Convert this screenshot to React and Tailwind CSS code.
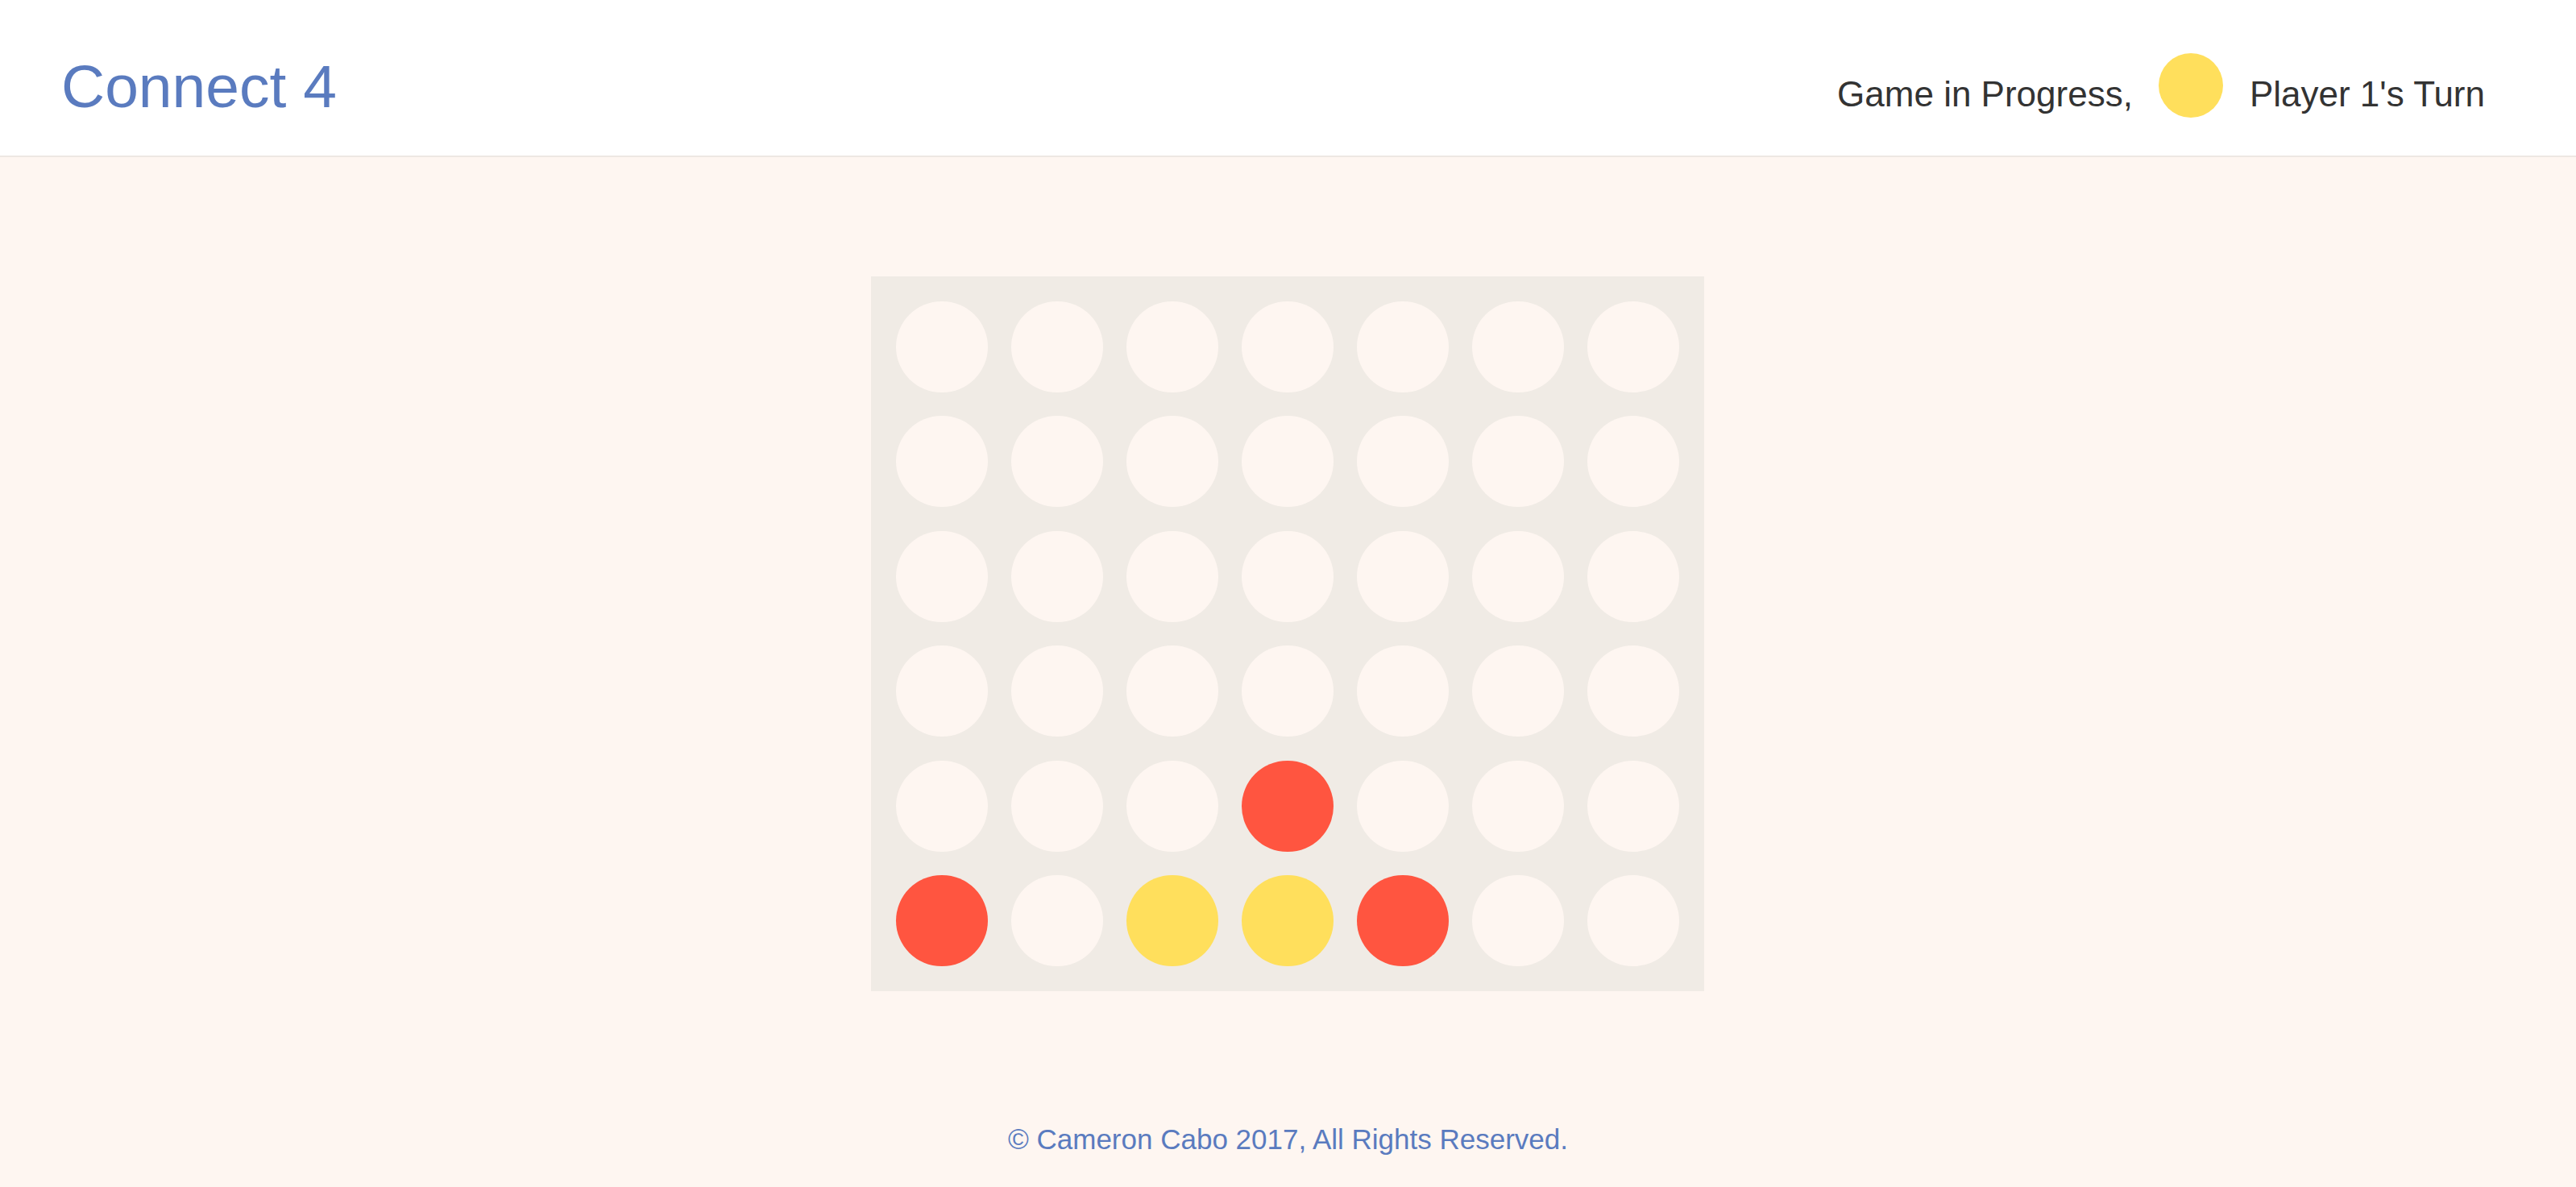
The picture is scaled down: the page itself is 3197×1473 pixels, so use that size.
import React from 'react';

const board = [
  [0, 0, 0, 0, 0, 0, 0],
  [0, 0, 0, 0, 0, 0, 0],
  [0, 0, 0, 0, 0, 0, 0],
  [0, 0, 0, 0, 0, 0, 0],
  [0, 0, 0, 1, 0, 0, 0],
  [1, 0, 2, 2, 1, 0, 0],
];

const cellColor = (v) => {
  if (v === 1) return 'bg-[#ff5540]';
  if (v === 2) return 'bg-[#ffdf5c]';
  return 'bg-[#fef6f1]';
};

const App = () => {
  return (
    <div className="h-screen flex flex-col bg-[#fef6f1] font-['Liberation_Sans',Arial,sans-serif]">
      {/* Header */}
      <header className="h-[195px] shrink-0 bg-white border-b-2 border-[#ede8e3] flex items-center justify-between pl-[76px] pr-[113px]">
        <h1 className="text-[75px] leading-none text-[#5a7bbf] mt-[22px]">Connect 4</h1>
        <div className="flex items-center text-[44px] text-[#333333] mt-[40px]">
          <span>Game in Progress,</span>
          <span className="w-[80px] h-[80px] rounded-full bg-[#ffdf5c] ml-[32px] mr-[33px] mt-[-22px]"></span>
          <span>Player 1's Turn</span>
        </div>
      </header>

      {/* Board */}
      <main className="flex justify-center pt-[148px] pr-[2px]">
        <div className="bg-[#f0ebe5] grid grid-cols-7 gap-x-[29px] gap-y-[29.4px] p-[31px]">
          {board.flat().map((v, i) => (
            <div key={i} className={`w-[114px] h-[113px] rounded-full ${cellColor(v)}`}></div>
          ))}
        </div>
      </main>

      {/* Footer */}
      <footer className="mt-auto pb-[33px] text-center text-[35px] text-[#5a7bbf]">
        © Cameron Cabo 2017, All Rights Reserved.
      </footer>
    </div>
  );
};

export default App;
